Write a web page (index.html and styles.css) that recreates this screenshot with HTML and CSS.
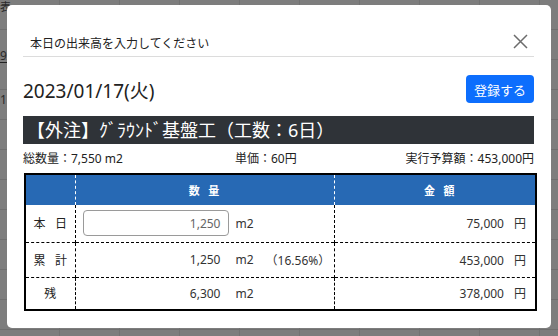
FILE: index.html
```html
<!DOCTYPE html>
<html lang="ja">
<head>
<meta charset="utf-8">
<title>出来高入力</title>
<link rel="stylesheet" href="styles.css">
</head>
<body>
<div class="backdrop">
  <div class="bg-top">表</div>
  <div class="bg-left"><span class="n9">9</span><span class="n1">1</span></div>
</div>
<div class="modal">
  <div class="modal-header">
    <h5 class="modal-title">本日の出来高を入力してください</h5>
    <button class="close" type="button" aria-label="閉じる">
      <svg width="15" height="15" viewBox="0 0 15 15"><path d="M1 1 L14 14 M14 1 L1 14" stroke="#6c6c6c" stroke-width="1.5" fill="none"/></svg>
    </button>
  </div>
  <div class="modal-body">
    <div class="date-row">
      <div class="date">2023/01/17(火)</div>
      <button class="btn-primary" type="button">登録する</button>
    </div>
    <div class="title-bar">【外注】ｸﾞﾗｳﾝﾄﾞ基盤工（工数：6日）</div>
    <div class="info-row">
      <span class="info-left">総数量：7,550 m2</span>
      <span class="info-mid">単価：60円</span>
      <span class="info-right">実行予算額：453,000円</span>
    </div>
    <table class="qty-table">
      <colgroup>
        <col class="c1"><col class="c2"><col class="c3">
      </colgroup>
      <thead>
        <tr class="head">
          <th></th>
          <th>数&nbsp;&nbsp;量</th>
          <th>金&nbsp;&nbsp;額</th>
        </tr>
      </thead>
      <tbody>
        <tr class="r1">
          <td class="label">本&nbsp;&nbsp;&nbsp;日</td>
          <td class="qty">
            <div class="qty-line">
              <input class="qty-input" type="text" value="1,250">
              <span class="unit">m2</span>
            </div>
          </td>
          <td class="amt"><span class="num">75,000</span><span class="yen">円</span></td>
        </tr>
        <tr class="r2">
          <td class="label">累&nbsp;&nbsp;&nbsp;計</td>
          <td class="qty">
            <div class="qty-line">
              <span class="val">1,250</span>
              <span class="unit">m2</span>
              <span class="pct">（16.56%）</span>
            </div>
          </td>
          <td class="amt"><span class="num">453,000</span><span class="yen">円</span></td>
        </tr>
        <tr class="r3">
          <td class="label">残</td>
          <td class="qty">
            <div class="qty-line">
              <span class="val">6,300</span>
              <span class="unit">m2</span>
            </div>
          </td>
          <td class="amt"><span class="num">378,000</span><span class="yen">円</span></td>
        </tr>
      </tbody>
    </table>
  </div>
</div>
</body>
</html>
```
FILE: styles.css
```css
* { box-sizing: border-box; }
html, body { margin: 0; padding: 0; }
body {
  width: 558px;
  height: 336px;
  overflow: hidden;
  font-family: "Noto Sans", "Noto Sans CJK JP", sans-serif;
  color: #212529;
  background: #7d7d7d;
  position: relative;
}
.backdrop {
  position: absolute;
  inset: 0;
  background-color: #7d7d7d;
  background-image:
    repeating-linear-gradient(to bottom, transparent 0, transparent 29px, #6f6f6f 29px, #6f6f6f 30px),
    repeating-linear-gradient(to right, transparent 0, transparent 59px, #727272 59px, #727272 60px);
}
.bg-top {
  font-size: 11px;
  line-height: 12px;
  color: #2a2a2a;
  padding-top: 1px;
}
.bg-left {
  position: absolute;
  left: 0;
  top: 50px;
  display: flex;
  flex-direction: column;
  font-size: 12px;
  color: #2a2a2a;
}
.n9 { border-bottom: 1px solid #222; width: 7px; line-height: 12px; height: 13px; }
.n1 { margin-top: 31px; line-height: 12px; }

.modal {
  position: absolute;
  left: 7px;
  top: 5px;
  width: 544px;
  height: 323px;
  background: #fff;
  border-radius: 5px;
  padding: 0 17px 0 16px;
}
.modal-header {
  display: flex;
  align-items: center;
  justify-content: space-between;
  height: 52px;
  padding: 24px 6px 0 7px;
  border-bottom: 1px solid #dcdcdc;
}
.modal-title {
  margin: 0;
  font-size: 12px;
  font-weight: 400;
  color: #222;
}
.close {
  border: 0;
  background: transparent;
  padding: 0;
  width: 16px;
  height: 16px;
  display: flex;
  align-items: center;
  justify-content: center;
  margin-top: -2px;
}
.modal-body {
  padding-top: 18px;
}
.date-row {
  display: flex;
  align-items: center;
  justify-content: space-between;
  height: 28px;
}
.date {
  font-size: 19px;
  color: #222;
  padding-top: 2px;
}
.btn-primary {
  background: #0d6efd;
  color: #fff;
  border: 0;
  border-radius: 4px;
  font-family: inherit;
  font-size: 13px;
  width: 68px;
  height: 28px;
  padding: 0;
}
.title-bar {
  margin-top: 13px;
  height: 28px;
  background: #2f3338;
  color: #fff;
  font-size: 18px;
  line-height: 28px;
  padding-left: 4px;
  white-space: nowrap;
}
.info-row {
  display: flex;
  align-items: center;
  height: 29px;
  font-size: 12px;
  color: #222;
  padding-bottom: 1px;
}
.info-left { width: 212px; }
.info-mid { flex: 1; }
.info-right { text-align: right; }

.qty-table {
  width: 511px;
  border-collapse: collapse;
  border: 2px solid #000;
  font-size: 12px;
  color: #333;
  margin-left: 1px;
  table-layout: fixed;
}
.c1 { width: 50px; }
.c2 { width: 259px; }
.c3 { width: 202px; }
.qty-table th {
  background: #2769b4;
  color: #fff;
  font-size: 11px;
  font-weight: 700;
  height: 31px;
  padding: 0;
  letter-spacing: 1px;
}
.qty-table th + th { border-left: 1px dashed #fff; }
.qty-table th:nth-child(3) { padding-left: 10px; }
.qty-table td {
  padding: 0;
  border-left: 1px dashed #000;
  border-top: 1px dashed #000;
}
.qty-table td:first-child { border-left: 0; }
.qty-table tr.r1 td { border-top: 0; height: 37px; }
.qty-table tr.r2 td { height: 35px; }
.qty-table tr.r3 td { height: 33px; }
.label {
  text-align: center;
  font-size: 12px;
  color: #222;
}
.qty-line {
  display: flex;
  align-items: center;
  padding-left: 7px;
}
.qty-input {
  width: 146px;
  height: 26px;
  border: 1px solid #9a9a9a;
  border-radius: 4px;
  text-align: right;
  font-family: inherit;
  font-size: 12px;
  color: #666;
  padding: 0 7px;
}
.val {
  width: 146px;
  text-align: right;
  padding-right: 8px;
}
.unit { margin-left: 7px; }
.pct { margin-left: 12px; }
.amt {
  text-align: right;
  padding-right: 9px !important;
}
.yen { margin-left: 10px; }
```
